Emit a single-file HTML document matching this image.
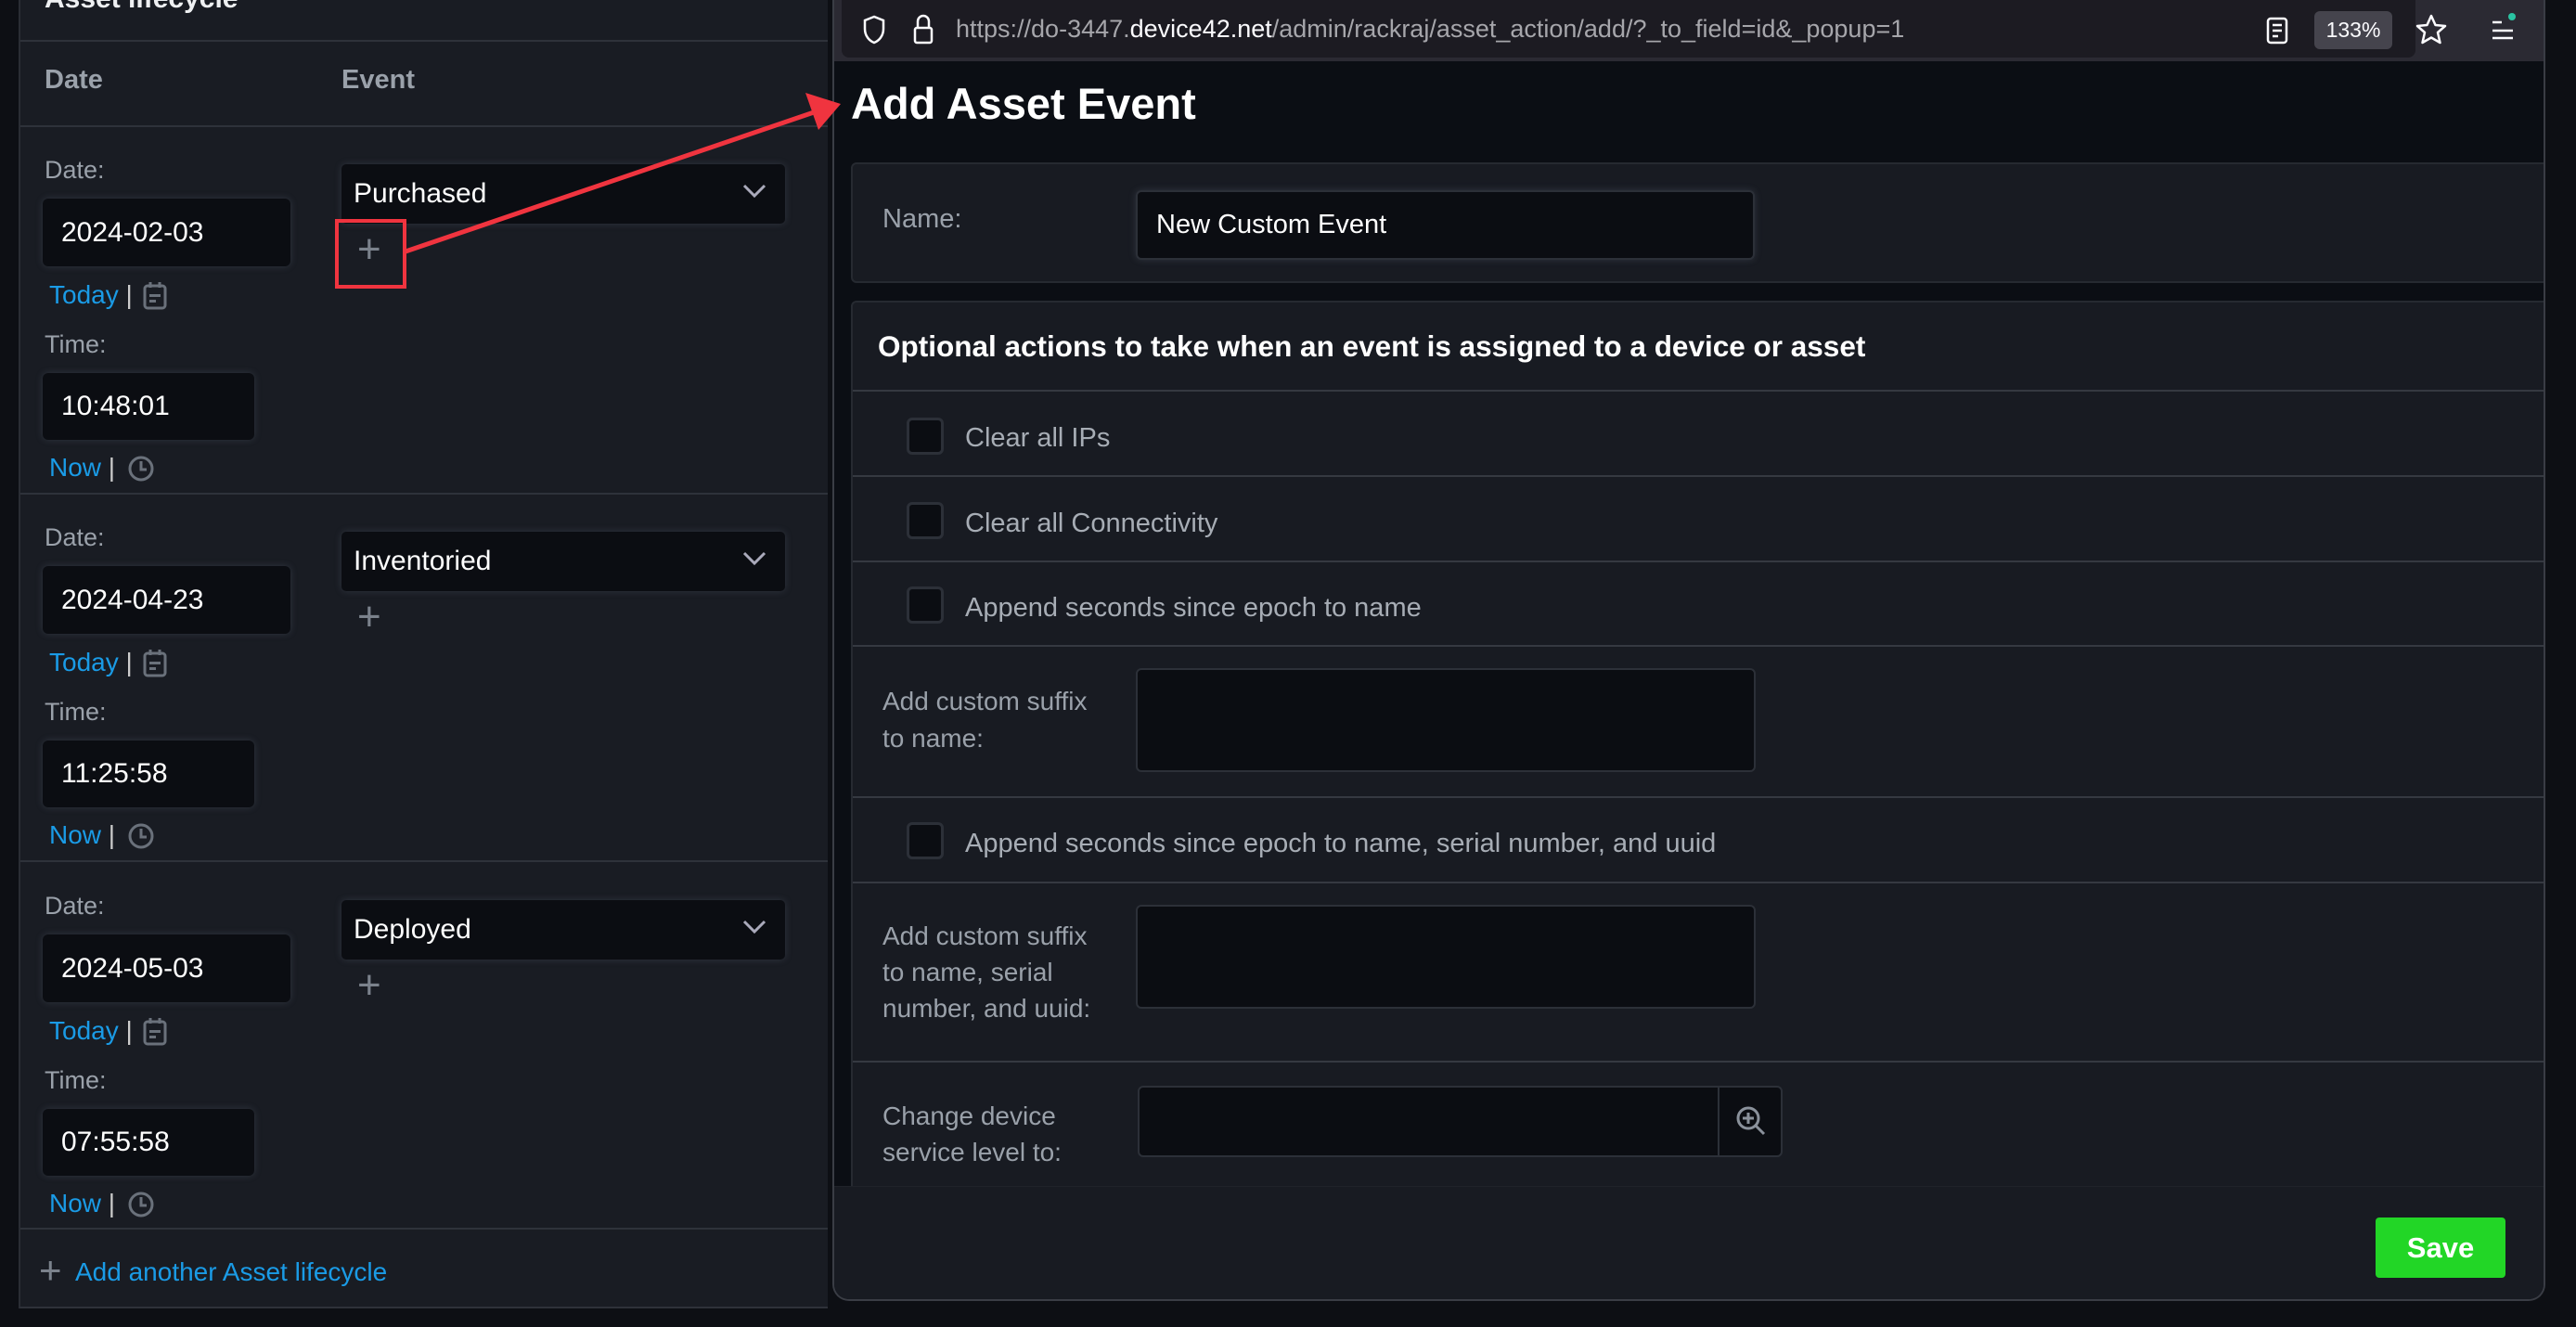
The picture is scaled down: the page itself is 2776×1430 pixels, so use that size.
<!DOCTYPE html>
<html><head><meta charset="utf-8"><style>
*{box-sizing:border-box;margin:0;padding:0}
body{width:2776px;height:1430px;background:#0d0f14;font-family:"Liberation Sans",sans-serif;position:relative;overflow:hidden;color:#e8eaed}
.a{position:absolute;white-space:nowrap}
.lp{left:20px;top:-20px;width:872px;height:1430px;background:#191c23;border-left:2px solid #2a2d34;border-bottom:2px solid #2e3139}
.hl{height:2px;background:#2e323a}
.lbl{color:#9aa1aa;font-size:27px}
.inp{background:#0b0d12;border-radius:6px;box-shadow:0 0 8px rgba(120,130,150,.25);color:#fff;font-size:30px;padding-left:20px;display:flex;align-items:center}
.lnk{color:#1a9be6;font-size:28px}
.sel{background:#0b0d12;border-radius:5px;box-shadow:0 0 8px rgba(120,130,150,.25);color:#fff;font-size:30px;padding-left:13px;display:flex;align-items:center}
.plus{color:#7b828c;font-size:44px;font-weight:300}
.pp{left:897px;top:0;width:1846px;height:1402px;background:#0b0e14;border:2px solid #3a3d45;border-top:none;border-radius:0 0 18px 18px;overflow:hidden}
.card{background:#181b22;border:2px solid #262a31;border-radius:6px}
.cb{width:40px;height:40px;background:#0b0d12;border:3px solid #2c3038;border-radius:6px}
.ck{color:#a7adb5;font-size:29px}
.ta{background:#0b0d12;border:2px solid #2c3038;border-radius:6px}
</style></head><body>
<div class="a lp"></div>
<div class="a" style="left:48px;top:-18px;font-size:30px;font-weight:bold;color:#eef0f2">Asset lifecycle</div>
<div class="a hl" style="left:22px;top:43px;width:870px"></div>
<div class="a lbl" style="left:48px;top:70px;font-weight:bold;font-size:29px">Date</div>
<div class="a lbl" style="left:368px;top:70px;font-weight:bold;font-size:29px">Event</div>
<div class="a hl" style="left:22px;top:135px;width:870px"></div>
<div class="a hl" style="left:22px;top:531px;width:870px"></div>
<div class="a hl" style="left:22px;top:927px;width:870px"></div>
<div class="a hl" style="left:22px;top:1323px;width:870px"></div>

<div class="a" style="left:0;top:0">
 <div class="a lbl" style="left:48px;top:168px">Date:</div>
 <div class="a inp" style="left:46px;top:214px;width:267px;height:73px">2024-02-03</div>
 <div class="a lnk" style="left:53px;top:302px">Today <span style="color:#ccc">|</span></div>
 <svg class="a" style="left:153px;top:302px" width="28" height="32" viewBox="0 0 28 32"><rect x="3" y="6" width="22" height="24" rx="3" fill="none" stroke="#6a717b" stroke-width="3"/><line x1="9" y1="2" x2="9" y2="8" stroke="#6a717b" stroke-width="3"/><line x1="19" y1="2" x2="19" y2="8" stroke="#6a717b" stroke-width="3"/><rect x="8" y="15" width="12" height="3" fill="#6a717b"/><rect x="8" y="21" width="7" height="3" fill="#6a717b"/></svg>
 <div class="a lbl" style="left:48px;top:356px">Time:</div>
 <div class="a inp" style="left:46px;top:402px;width:228px;height:72px">10:48:01</div>
 <div class="a lnk" style="left:53px;top:488px">Now <span style="color:#ccc">|</span></div>
 <svg class="a" style="left:136px;top:489px" width="32" height="32" viewBox="0 0 32 32"><circle cx="16" cy="16" r="12" fill="none" stroke="#6a717b" stroke-width="3"/><path d="M16 8v9h6" fill="none" stroke="#6a717b" stroke-width="3"/></svg>
 <div class="a sel" style="left:368px;top:177px;width:478px;height:64px">Purchased</div>
 <svg class="a" style="left:800px;top:198px" width="26" height="16" viewBox="0 0 26 16"><path d="M2 2l11 11 11-11" fill="none" stroke="#aab" stroke-width="3"/></svg>
 <div class="a plus" style="left:385px;top:244px">+</div>
</div>
<div class="a" style="left:0;top:396px">
 <div class="a lbl" style="left:48px;top:168px">Date:</div>
 <div class="a inp" style="left:46px;top:214px;width:267px;height:73px">2024-04-23</div>
 <div class="a lnk" style="left:53px;top:302px">Today <span style="color:#ccc">|</span></div>
 <svg class="a" style="left:153px;top:302px" width="28" height="32" viewBox="0 0 28 32"><rect x="3" y="6" width="22" height="24" rx="3" fill="none" stroke="#6a717b" stroke-width="3"/><line x1="9" y1="2" x2="9" y2="8" stroke="#6a717b" stroke-width="3"/><line x1="19" y1="2" x2="19" y2="8" stroke="#6a717b" stroke-width="3"/><rect x="8" y="15" width="12" height="3" fill="#6a717b"/><rect x="8" y="21" width="7" height="3" fill="#6a717b"/></svg>
 <div class="a lbl" style="left:48px;top:356px">Time:</div>
 <div class="a inp" style="left:46px;top:402px;width:228px;height:72px">11:25:58</div>
 <div class="a lnk" style="left:53px;top:488px">Now <span style="color:#ccc">|</span></div>
 <svg class="a" style="left:136px;top:489px" width="32" height="32" viewBox="0 0 32 32"><circle cx="16" cy="16" r="12" fill="none" stroke="#6a717b" stroke-width="3"/><path d="M16 8v9h6" fill="none" stroke="#6a717b" stroke-width="3"/></svg>
 <div class="a sel" style="left:368px;top:177px;width:478px;height:64px">Inventoried</div>
 <svg class="a" style="left:800px;top:198px" width="26" height="16" viewBox="0 0 26 16"><path d="M2 2l11 11 11-11" fill="none" stroke="#aab" stroke-width="3"/></svg>
 <div class="a plus" style="left:385px;top:244px">+</div>
</div>
<div class="a" style="left:0;top:793px">
 <div class="a lbl" style="left:48px;top:168px">Date:</div>
 <div class="a inp" style="left:46px;top:214px;width:267px;height:73px">2024-05-03</div>
 <div class="a lnk" style="left:53px;top:302px">Today <span style="color:#ccc">|</span></div>
 <svg class="a" style="left:153px;top:302px" width="28" height="32" viewBox="0 0 28 32"><rect x="3" y="6" width="22" height="24" rx="3" fill="none" stroke="#6a717b" stroke-width="3"/><line x1="9" y1="2" x2="9" y2="8" stroke="#6a717b" stroke-width="3"/><line x1="19" y1="2" x2="19" y2="8" stroke="#6a717b" stroke-width="3"/><rect x="8" y="15" width="12" height="3" fill="#6a717b"/><rect x="8" y="21" width="7" height="3" fill="#6a717b"/></svg>
 <div class="a lbl" style="left:48px;top:356px">Time:</div>
 <div class="a inp" style="left:46px;top:402px;width:228px;height:72px">07:55:58</div>
 <div class="a lnk" style="left:53px;top:488px">Now <span style="color:#ccc">|</span></div>
 <svg class="a" style="left:136px;top:489px" width="32" height="32" viewBox="0 0 32 32"><circle cx="16" cy="16" r="12" fill="none" stroke="#6a717b" stroke-width="3"/><path d="M16 8v9h6" fill="none" stroke="#6a717b" stroke-width="3"/></svg>
 <div class="a sel" style="left:368px;top:177px;width:478px;height:64px">Deployed</div>
 <svg class="a" style="left:800px;top:198px" width="26" height="16" viewBox="0 0 26 16"><path d="M2 2l11 11 11-11" fill="none" stroke="#aab" stroke-width="3"/></svg>
 <div class="a plus" style="left:385px;top:244px">+</div>
</div>
<div class="a" style="left:42px;top:1348px;color:#7b828c;font-size:42px;line-height:42px">+</div>
<div class="a lnk" style="left:81px;top:1355px">Add another Asset lifecycle</div>

<div class="a pp">
 <div class="a" style="left:0;top:0;width:1846px;height:66px;background:#2b2a33"></div>
 <div class="a" style="left:8px;top:0;width:1696px;height:62px;background:#1c1b22;border-radius:0 0 8px 8px"></div>
 <svg class="a" style="left:30px;top:16px" width="26" height="32" viewBox="0 0 26 32"><path d="M13 2L3 6v9c0 8 5 13 10 15 5-2 10-7 10-15V6z" fill="none" stroke="#fbfbfe" stroke-width="2.5"/></svg>
 <svg class="a" style="left:84px;top:14px" width="24" height="34" viewBox="0 0 24 34"><path d="M6 16V9a6 6 0 0 1 12 0v7" fill="none" stroke="#fbfbfe" stroke-width="2.5"/><rect x="3" y="16" width="18" height="16" rx="2" fill="none" stroke="#fbfbfe" stroke-width="2.5"/></svg>
 <div class="a" style="left:131px;top:16px;font-size:27px;color:#a6a6ab">https://do-3447.<span style="color:#fbfbfe">device42.net</span>/admin/rackraj/asset_action/add/?_to_field=id&amp;_popup=1</div>
 <svg class="a" style="left:1543px;top:18px" width="24" height="30" viewBox="0 0 24 30"><rect x="2" y="2" width="20" height="26" rx="3" fill="none" stroke="#fbfbfe" stroke-width="2.5"/><path d="M7 9h10M7 15h10M7 21h6" stroke="#fbfbfe" stroke-width="2.5"/></svg>
 <div class="a" style="left:1595px;top:12px;width:84px;height:41px;background:#45444d;border-radius:6px;color:#fbfbfe;font-size:23px;display:flex;align-items:center;justify-content:center">133%</div>
 <svg class="a" style="left:1703px;top:14px" width="36" height="36" viewBox="0 0 36 36"><path d="M18 3l4.5 10 10.5 1-8 7 2.5 11L18 26.5 8.5 32 11 21 3 14l10.5-1z" fill="none" stroke="#fbfbfe" stroke-width="2.5" stroke-linejoin="round"/></svg>
 <svg class="a" style="left:1783px;top:12px" width="32" height="36" viewBox="0 0 32 36"><path d="M4 12h10M4 21h22M4 29h22" stroke="#fbfbfe" stroke-width="2.5"/><circle cx="25" cy="6" r="4" fill="#2ac3a2"/></svg>

 <div class="a" style="left:18px;top:84px;font-size:47px;font-weight:bold;color:#fff">Add Asset Event</div>

 <div class="a card" style="left:18px;top:175px;width:1840px;height:130px"></div>
 <div class="a lbl" style="left:52px;top:220px;font-size:29px">Name:</div>
 <div class="a inp" style="left:325px;top:205px;width:667px;height:75px;border:2px solid #2c3038;font-size:29px">New Custom Event</div>

 <div class="a card" style="left:18px;top:324px;width:1840px;height:1000px"></div>
 <div class="a" style="left:47px;top:355px;font-size:31.5px;font-weight:bold;color:#fff">Optional actions to take when an event is assigned to a device or asset</div>
 <div class="a hl" style="left:20px;top:420px;width:1830px;background:#353941"></div>

 <div class="a cb" style="left:78px;top:450px"></div><div class="a ck" style="left:141px;top:456px">Clear all IPs</div>
 <div class="a hl" style="left:20px;top:512px;width:1830px;background:#353941"></div>
 <div class="a cb" style="left:78px;top:541px"></div><div class="a ck" style="left:141px;top:548px">Clear all Connectivity</div>
 <div class="a hl" style="left:20px;top:604px;width:1830px;background:#353941"></div>
 <div class="a cb" style="left:78px;top:632px"></div><div class="a ck" style="left:141px;top:639px">Append seconds since epoch to name</div>
 <div class="a hl" style="left:20px;top:695px;width:1830px;background:#353941"></div>
 <div class="a lbl" style="left:52px;top:736px;font-size:28px;line-height:40px">Add custom suffix<br>to name:</div>
 <div class="a ta" style="left:325px;top:720px;width:668px;height:112px"></div>
 <div class="a hl" style="left:20px;top:858px;width:1830px;background:#353941"></div>
 <div class="a cb" style="left:78px;top:886px"></div><div class="a ck" style="left:141px;top:893px">Append seconds since epoch to name, serial number, and uuid</div>
 <div class="a hl" style="left:20px;top:950px;width:1830px;background:#353941"></div>
 <div class="a lbl" style="left:52px;top:989px;font-size:28px;line-height:39px">Add custom suffix<br>to name, serial<br>number, and uuid:</div>
 <div class="a ta" style="left:325px;top:975px;width:668px;height:112px"></div>
 <div class="a hl" style="left:20px;top:1143px;width:1830px;background:#353941"></div>
 <div class="a lbl" style="left:52px;top:1183px;font-size:28px;line-height:39px">Change device<br>service level to:</div>
 <div class="a ta" style="left:327px;top:1170px;width:695px;height:77px"></div>
 <div class="a" style="left:952px;top:1172px;width:2px;height:73px;background:#2c3038"></div>
 <svg class="a" style="left:970px;top:1190px" width="36" height="36" viewBox="0 0 36 36"><circle cx="15" cy="15" r="11" fill="none" stroke="#8a919b" stroke-width="3"/><path d="M23 23l9 9M15 9v12M9 15h12" stroke="#8a919b" stroke-width="3"/></svg>

 <div class="a" style="left:0;top:1278px;width:1846px;height:124px;background:#181b22;border-top:1px solid #20232a"></div>
 <div class="a" style="left:1661px;top:1312px;width:140px;height:65px;background:#22d626;border-radius:4px;color:#fff;font-size:31px;font-weight:bold;display:flex;align-items:center;justify-content:center">Save</div>
</div>

<div class="a" style="left:361px;top:236px;width:77px;height:75px;border:4px solid #f0343f"></div>
<svg class="a" style="left:0;top:0" width="2776" height="1430"><line x1="437" y1="271" x2="880" y2="120" stroke="#f0343f" stroke-width="5"/><polygon points="906,112 868,100 882,140" fill="#f0343f"/></svg>
</body></html>
